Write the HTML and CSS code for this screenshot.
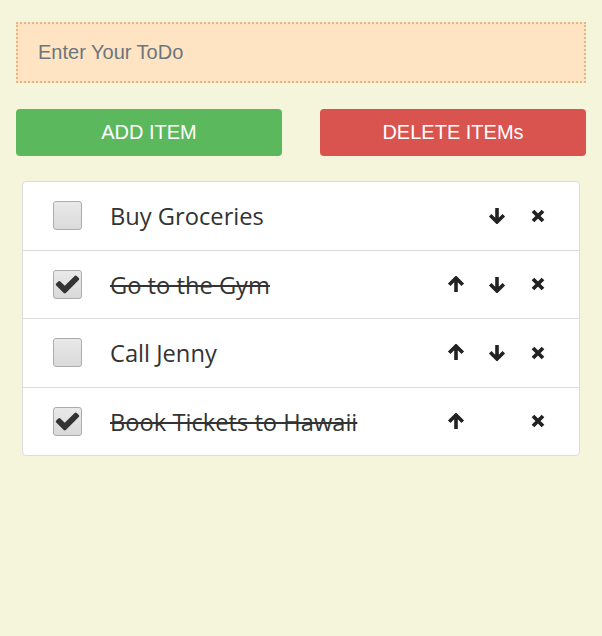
FILE: index.html
```html
<!DOCTYPE html>
<html>
<head>
<meta charset="utf-8">
<link rel="stylesheet" href="styles.css">
</head>
<body>
<div class="app">
  <input class="todo-input" type="text" placeholder="Enter Your ToDo">
  <div class="actions">
    <button class="btn btn-add">ADD ITEM</button>
    <button class="btn btn-delete">DELETE ITEMs</button>
  </div>
  <ul class="list">
    <li class="item">
      <span class="check"></span>
      <span class="label">Buy Groceries</span>
      <span class="controls">
        <span class="slot"></span>
        <span class="slot"><svg class="ico" viewBox="0 0 18 17"><path d="M9 1V15M2.2 8.2L9 15L15.8 8.2"/></svg></span>
        <span class="slot"><svg class="ico x" viewBox="0 0 14 14"><path d="M2 2L12 12M12 2L2 12"/></svg></span>
      </span>
    </li>
    <li class="item done">
      <span class="check"><svg class="tick" viewBox="0 0 1792 1792"><path d="M1671 566q0 40-28 68l-724 724-136 136q-28 28-68 28t-68-28l-136-136-362-362q-28-28-28-68t28-68l136-136q28-28 68-28t68 28l294 295 656-657q28-28 68-28t68 28l136 136q28 28 28 68z"/></svg></span>
      <span class="label">Go to the Gym</span>
      <span class="controls">
        <span class="slot"><svg class="ico" viewBox="0 0 18 17"><path d="M9 16V2M2.2 8.8L9 2L15.8 8.8"/></svg></span>
        <span class="slot"><svg class="ico" viewBox="0 0 18 17"><path d="M9 1V15M2.2 8.2L9 15L15.8 8.2"/></svg></span>
        <span class="slot"><svg class="ico x" viewBox="0 0 14 14"><path d="M2 2L12 12M12 2L2 12"/></svg></span>
      </span>
    </li>
    <li class="item">
      <span class="check"></span>
      <span class="label">Call Jenny</span>
      <span class="controls">
        <span class="slot"><svg class="ico" viewBox="0 0 18 17"><path d="M9 16V2M2.2 8.8L9 2L15.8 8.8"/></svg></span>
        <span class="slot"><svg class="ico" viewBox="0 0 18 17"><path d="M9 1V15M2.2 8.2L9 15L15.8 8.2"/></svg></span>
        <span class="slot"><svg class="ico x" viewBox="0 0 14 14"><path d="M2 2L12 12M12 2L2 12"/></svg></span>
      </span>
    </li>
    <li class="item done">
      <span class="check"><svg class="tick" viewBox="0 0 1792 1792"><path d="M1671 566q0 40-28 68l-724 724-136 136q-28 28-68 28t-68-28l-136-136-362-362q-28-28-28-68t28-68l136-136q28-28 68-28t68 28l294 295 656-657q28-28 68-28t68 28l136 136q28 28 28 68z"/></svg></span>
      <span class="label">Book Tickets to Hawaii</span>
      <span class="controls">
        <span class="slot"><svg class="ico" viewBox="0 0 18 17"><path d="M9 16V2M2.2 8.8L9 2L15.8 8.8"/></svg></span>
        <span class="slot"></span>
        <span class="slot"><svg class="ico x" viewBox="0 0 14 14"><path d="M2 2L12 12M12 2L2 12"/></svg></span>
      </span>
    </li>
  </ul>
</div>
</body>
</html>
```

FILE: styles.css
```css
html, body {
  margin: 0;
  padding: 0;
}
body {
  background: #f5f5dc;
  font-family: "Liberation Sans", Arial, sans-serif;
}
.app {
  padding: 22px 16px;
}
.todo-input {
  display: block;
  width: 100%;
  height: 61px;
  box-sizing: border-box;
  border: 2px dotted #deb887;
  background: #ffe4c4;
  padding: 0 20px;
  font-family: "Liberation Sans", Arial, sans-serif;
  font-size: 20px;
  color: #333;
  outline: none;
}
.todo-input::placeholder {
  color: #6c757d;
}
.actions {
  display: grid;
  grid-template-columns: 1fr 1fr;
  column-gap: 38px;
  margin-top: 26px;
}
.btn {
  height: 47px;
  border: none;
  border-radius: 4px;
  color: #fff;
  font-family: "Liberation Sans", Arial, sans-serif;
  font-size: 20px;
  padding: 0;
}
.btn-add {
  background: #5cb85c;
}
.btn-delete {
  background: #d9534f;
}
.list {
  list-style: none;
  margin: 25px 6px 0;
  padding: 0;
  background: #fff;
  border: 1px solid #ddd;
  border-radius: 4px;
}
.item {
  display: flex;
  align-items: center;
  height: 67.5px;
  padding-left: 30px;
  padding-right: 21px;
}
.item + .item {
  border-top: 1px solid #ddd;
}
.check {
  width: 27px;
  height: 27px;
  flex: none;
  border: 1px solid #acacac;
  border-radius: 3px;
  background: linear-gradient(#e9e9e9, #dadada);
  display: flex;
  align-items: center;
  justify-content: center;
}
.tick {
  width: 28px;
  height: 28px;
  fill: #333;
}
.label {
  flex: 1;
  margin-left: 28px;
  padding-top: 3px;
  font-family: "Open Sans", sans-serif;
  font-size: 23.7px;
  color: #333;
  line-height: 1;
}
.done .label {
  text-decoration: line-through;
  text-decoration-thickness: 2px;
}
.controls {
  display: flex;
}
.slot {
  width: 41px;
  height: 20px;
  display: flex;
  align-items: center;
  justify-content: center;
}
.ico {
  width: 18px;
  height: 17px;
  fill: none;
  stroke: #222;
  stroke-width: 3.6;
}
.ico.x {
  width: 14px;
  height: 14px;
  stroke-width: 3.8;
}
```
